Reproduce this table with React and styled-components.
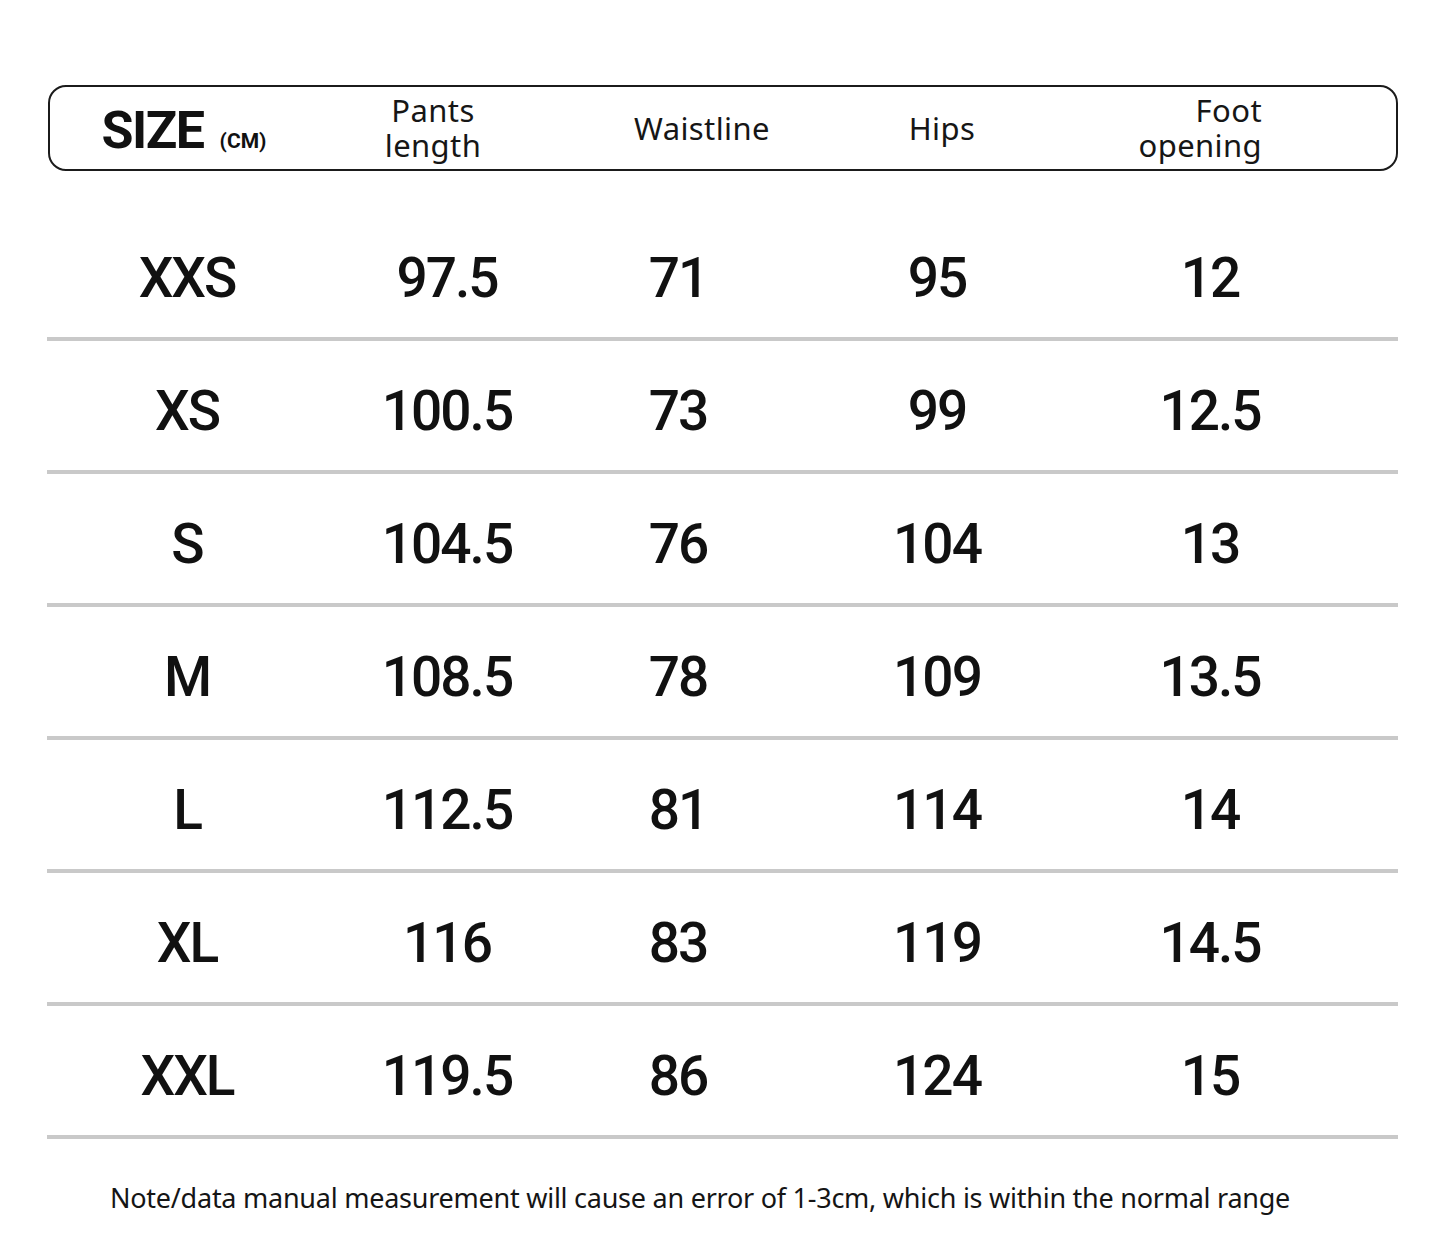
import React from "react";
import styled, { createGlobalStyle } from "styled-components";

const GlobalStyle = createGlobalStyle`
  body {
    margin: 0;
    background: #ffffff;
    color: #111111;
    font-family: "Noto Sans", "Open Sans", sans-serif;
  }
`;

const Page = styled.div`
  width: 1445px;
  height: 1248px;
  padding: 85px 47px 0 47px;
  box-sizing: border-box;
`;

const HeaderBox = styled.div`
  display: grid;
  grid-template-columns: 274px 218px 320px 160px 240px 1fr;
  align-items: center;
  height: 86px;
  margin-left: 1px;
  border: 2px solid #1b1b1b;
  border-radius: 18px;
  box-sizing: border-box;
`;

const SizeLabel = styled.div`
  display: flex;
  align-items: baseline;
  justify-content: center;
  gap: 16px;
  font-family: Roboto, "Liberation Sans", sans-serif;
  font-weight: 700;
  font-size: 52px;
  letter-spacing: -1.5px;
  padding-top: 4px;
  padding-right: 6px;

  small {
    font-size: 21px;
    letter-spacing: 0;
  }
`;

const HeadCell = styled.div`
  font-family: "Noto Sans", sans-serif;
  font-size: 31px;
  line-height: 35px;
  color: #161616;
  text-align: ${(p) => p.$align || "center"};
  letter-spacing: 0.4px;
  white-space: pre-line;
`;

const Body = styled.div`
  margin-top: 37px;
`;

const Row = styled.div`
  display: grid;
  grid-template-columns: 280px 240px 222px 296px 250px 1fr;
  align-items: center;
  height: 133px;
  padding-top: 10px;
  box-sizing: border-box;
  border-bottom: 4px solid #c9c9c9;
`;

const Cell = styled.div`
  text-align: center;
  font-family: Roboto, "Liberation Sans", sans-serif;
  font-weight: 500;
  font-size: 55px;
  letter-spacing: -2px;
  color: #111111;
`;

const Note = styled.p`
  margin: 40px 0 0 63px;
  font-family: "Noto Sans", sans-serif;
  font-size: 27px;
  letter-spacing: -0.25px;
  color: #151515;
`;

const rows = [
  ["XXS", "97.5", "71", "95", "12"],
  ["XS", "100.5", "73", "99", "12.5"],
  ["S", "104.5", "76", "104", "13"],
  ["M", "108.5", "78", "109", "13.5"],
  ["L", "112.5", "81", "114", "14"],
  ["XL", "116", "83", "119", "14.5"],
  ["XXL", "119.5", "86", "124", "15"],
];

export default function App() {
  return (
    <>
      <GlobalStyle />
      <Page>
        <HeaderBox>
          <SizeLabel>
            SIZE <small>(CM)</small>
          </SizeLabel>
          <HeadCell>{"Pants\nlength"}</HeadCell>
          <HeadCell>Waistline</HeadCell>
          <HeadCell>Hips</HeadCell>
          <HeadCell $align="right">{"Foot\nopening"}</HeadCell>
        </HeaderBox>
        <Body>
          {rows.map((r) => (
            <Row key={r[0]}>
              {r.map((v, i) => (
                <Cell key={i}>{v}</Cell>
              ))}
            </Row>
          ))}
        </Body>
        <Note>
          Note/data manual measurement will cause an error of 1-3cm, which is within the normal range
        </Note>
      </Page>
    </>
  );
}
